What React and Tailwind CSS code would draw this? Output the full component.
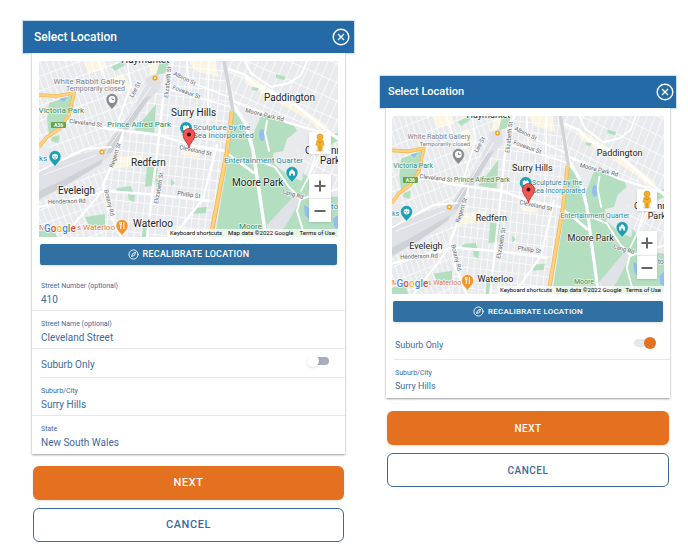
import React, { useId, useState } from 'react';
import { Compass } from 'lucide-react';

const MAP_W = 299;

const px = (x) => `${(x / MAP_W) * 100}%`;

const placeLabels = [
    { text: 'Haymarket', x: 82, y: 2, size: 10, kind: 'place' },
    { text: 'Surry Hills', x: 132, y: 55, size: 10, kind: 'place' },
    { text: 'Paddington', x: 225, y: 40, size: 10, kind: 'place' },
    { text: 'Redfern', x: 92, y: 105, size: 10, kind: 'place' },
    { text: 'Eveleigh', x: 19, y: 133, size: 10, kind: 'place' },
    { text: 'Moore Park', x: 193, y: 125, size: 10, kind: 'place' },
    { text: 'Waterloo', x: 94, y: 166, size: 10, kind: 'place' },
    { text: 'Centennial', x: 266, y: 93, size: 10, kind: 'place' },
    { text: 'Park', x: 281, y: 103, size: 10, kind: 'place' },
    { text: 'White Rabbit Gallery', x: 86, y: 23, size: 8, kind: 'muted', anchor: 'end' },
    { text: 'Temporarily closed', x: 86, y: 30, size: 7, kind: 'muted', anchor: 'end' },
    { text: 'Victoria Park', x: 45, y: 52, size: 8, kind: 'park', anchor: 'end' },
    { text: 'Prince Alfred Park', x: 68, y: 66, size: 8, kind: 'park' },
    { text: 'Moore', x: 200, y: 168, size: 8, kind: 'park' },
    { text: 'Sculpture by the', x: 154, y: 69, size: 8, kind: 'sight' },
    { text: 'Sea Incorporated', x: 154, y: 77, size: 8, kind: 'sight' },
    { text: 'Entertainment Quarter', x: 185, y: 102, size: 8, kind: 'sight' },
    { text: 'ks', x: 0, y: 100, size: 8, kind: 'sight' },
    { text: 'to', x: 292, y: 148, size: 8, kind: 'sight' },
    { text: 'M', x: 0, y: 169, size: 8, kind: 'food' },
    { text: 's Waterloo', x: 76, y: 169, size: 8, kind: 'food', anchor: 'end' },
    { text: 'Lee St', x: 94, y: 37, size: 6, kind: 'street', rotate: -62 },
    { text: 'Elizabeth St', x: 129, y: 37, size: 6, kind: 'street', rotate: -84 },
    { text: 'Albion St', x: 134, y: 14, size: 6, kind: 'street', rotate: 26 },
    { text: 'Foveaux St', x: 133, y: 28, size: 6, kind: 'street', rotate: 20 },
    { text: 'Cleveland St', x: 30, y: 62, size: 6, kind: 'street', rotate: 7 },
    { text: 'Cleveland St', x: 140, y: 88, size: 6, kind: 'street', rotate: 12 },
    { text: 'Moore Park Rd', x: 206, y: 51, size: 6, kind: 'street', rotate: 14 },
    { text: 'Lang Rd', x: 243, y: 132, size: 6, kind: 'street', rotate: 17 },
    { text: 'Regent St', x: 74, y: 107, size: 6, kind: 'street', rotate: -72 },
    { text: 'Botany Rd', x: 65, y: 129, size: 6, kind: 'street', rotate: 76 },
    { text: 'Elizabeth St', x: 119, y: 143, size: 6, kind: 'street', rotate: -80 },
    { text: 'Phillip St', x: 138, y: 134, size: 6, kind: 'street', rotate: 8 },
    { text: 'Henderson Rd', x: 9, y: 143, size: 6, kind: 'street', rotate: -2 },
];

const labelColors = {
    place: '#202124',
    muted: '#7b8087',
    park: '#2f8a57',
    sight: '#2a8ba3',
    food: '#dd7a3c',
    street: '#5f6368',
};

const googleLetters = [
    ['G', '#4285f4'],
    ['o', '#ea4335'],
    ['o', '#fbbc04'],
    ['g', '#4285f4'],
    ['l', '#34a853'],
    ['e', '#ea4335'],
];

function MapPin({ x, y, color, children }) {
    return (
        <svg x={px(x)} y={y} overflow="visible">
            <path d="M0 0C-.8-3-6-5.5-6-10.5A6 6 0 0 1 6-10.5C6-5.5.8-3 0 0Z" fill={color} stroke="#fff" strokeWidth=".5" />
            {children}
        </svg>
    );
}

function MapTerrain() {
    const id = useId();
    const fine = `${id}-fine`;
    const slanted = `${id}-slanted`;
    const wide = `${id}-wide`;

    return (
        <svg className="absolute inset-0 h-full w-full" viewBox="0 0 299 176" preserveAspectRatio="none" aria-hidden="true">
            <defs>
                <pattern id={fine} width="7" height="10" patternUnits="userSpaceOnUse" patternTransform="rotate(6)">
                    <path d="M0 0H7M0 0V10" stroke="#fff" strokeWidth="1.5" />
                </pattern>
                <pattern id={slanted} width="6" height="14" patternUnits="userSpaceOnUse" patternTransform="rotate(-20)">
                    <path d="M0 0H6M0 0V14" stroke="#fff" strokeWidth="1.4" />
                </pattern>
                <pattern id={wide} width="8" height="17" patternUnits="userSpaceOnUse" patternTransform="rotate(24)">
                    <path d="M0 0H8M0 0V17" stroke="#fff" strokeWidth="1.4" />
                </pattern>
            </defs>
            <rect width="299" height="176" fill="#e8eaed" />

            {/* Commercial blocks */}
            <g fill="#fbf5e1">
                <path d="M44 0L66 0L68 8L50 12ZM70 18L84 12L92 26L80 34ZM112 4L122 0L120 14L108 20ZM150 0H176L180 16L156 10ZM76 96L104 94L102 104L74 108ZM142 86L160 90L158 96L142 94Z" />
                <path d="M206 14L216 18L276 56L290 66L284 72L268 58L206 22Z" />
            </g>

            {/* Street grids */}
            <path d="M0 0H122L66 92L40 98L0 84Z" fill={`url(#${slanted})`} />
            <path d="M128 0H186L194 52L174 176H64L72 100L118 10Z" fill={`url(#${fine})`} />
            <path d="M186 0H299V72L256 62L194 46Z" fill={`url(#${wide})`} />
            <path d="M0 140L70 104L66 176H0Z" fill={`url(#${slanted})`} />
            <path d="M258 88L299 78V132L264 122Z" fill={`url(#${wide})`} />

            {/* Rail yards */}
            <path d="M0 108L26 98L62 88L96 48L108 16L120 12L122 26L86 66L70 96L30 120L0 140Z" fill="#dfe1e6" />
            <path d="M0 130L22 120L64 98L62 103L28 124L0 138Z" fill="#ced1d6" />
            <path d="M62 93L88 58L104 38L112 34L98 56L72 92Z" fill="#ced1d6" />
            <path d="M66 92L112 26M62 90L108 22M4 114L58 94" fill="none" stroke="#f5f6f8" strokeWidth="1" />

            {/* Parks */}
            <g fill="#b3dfc0">
                <path d="M10 42L34 34L30 54L22 66L10 74L8 58Z" />
                <path d="M13 76L21 74L19 82L12 80Z" />
                <path d="M117 43L115 72L95 69L108 54Z" />
                <path d="M121 0H131L126 12L117 14Z" />
                <path d="M72 6L84 0L86 4L76 10Z" />
                <path d="M108 105L119 107L116 124L106 126Z" />
                <path d="M78 127L92 125L94 131L76 132ZM89 133L96 134L95 141L90 139ZM117 118L124 120L122 126L117 124ZM132 118L136 122L132 125Z" />
                <path d="M46 156L66 153V166L50 165ZM0 170L14 166L18 176H0ZM104 164L112 162L108 176H103ZM0 145L6 143L2 148Z" />
                <path d="M155 147L168 146L167 152L155 153Z" />
                <path d="M237 13L247 16L245 19L237 17ZM213 26L220 27L218 30L213 29Z" />
                <path d="M194 50L203 57L211 78L219 120L230 176H176L190 92Z" />
                <path d="M221 57L226 51L243 58L254 62L258 70L248 78L244 90L234 92L236 104L252 116L263 120L264 112L272 118L269 134L258 142L240 162L227 164L215 88L213 76Z" />
                <path d="M254 146L270 134L299 136V176H240Z" />
                <path d="M284 78L299 72V80L286 86Z" />
            </g>
            <path d="M228 164L256 134L262 138L246 166L236 172Z" fill="#dfe2e7" />
            <g fill="#94bdf2">
                <ellipse cx="223" cy="74" rx="3" ry="6" />
                <path d="M20 38L28 36L25 41ZM265 144L272 148L270 158L266 154ZM294 158L299 154V168L295 166Z" />
            </g>

            {/* Main roads */}
            <g fill="none" stroke="#fff" strokeLinecap="round">
                <path d="M14 72L30 60L70 68L120 74L152 84L186 90" strokeWidth="2.6" />
                <path d="M88 0L92 24L76 70M60 0L70 28" strokeWidth="1.8" />
                <path d="M134 0L124 40L120 76L108 176" strokeWidth="2.4" />
                <path d="M84 72L76 96L64 124L70 150L82 176" strokeWidth="2.6" />
                <path d="M0 146L60 132L66 130L120 134L170 140" strokeWidth="2.6" />
                <path d="M60 134L24 176M0 110L46 88L72 86" strokeWidth="2" />
                <path d="M178 84L164 138L134 176" strokeWidth="2.4" />
                <path d="M128 12L190 36M128 28L192 46M148 0L150 30M170 0L168 80" strokeWidth="1.8" />
                <path d="M193 42L206 62L214 89L220 130L227 176" strokeWidth="3.4" />
                <path d="M190 8L206 14L216 24L254 42L299 78" strokeWidth="2.8" />
                <path d="M188 12L194 40L250 62L299 76" strokeWidth="2.6" />
                <path d="M206 0L212 12L232 26L250 22L262 14L268 0" strokeWidth="2" />
                <path d="M188 92L214 112M200 100L218 114M228 60L226 72L230 90" strokeWidth="2" />
                <path d="M214 98L236 106L250 126L262 138L299 128M262 136L258 150L266 176" strokeWidth="2" />
                <path d="M286 84L262 130M270 84L276 96L268 120" strokeWidth="1.6" />
            </g>
            <path d="M185 0L190 26L194 50" fill="none" stroke="#d0d3d8" strokeWidth="3.6" />

            {/* Highways */}
            <g fill="none" stroke="#f3b24c" strokeWidth="4.4">
                <path d="M193 50L188 90L174 164L172 176" />
                <path d="M0 34L18 35L35 32L30 54L20 68L8 76L0 86" strokeWidth="3.6" />
            </g>
            <g fill="none" stroke="#fcd27c" strokeWidth="3">
                <path d="M193 50L188 90L174 164L172 176" />
                <path d="M0 34L18 35L35 32L30 54L20 68L8 76L0 86" strokeWidth="2.4" />
            </g>
        </svg>
    );
}

function MapLabels({ compact }) {
    const labelSize = ({ size }) => (compact && size > 6 ? size - 1 : size);

    return (
        <svg className="absolute inset-0 h-full w-full">
            {[[116, 17], [63, 91]].map(([x, y]) => (
                <svg key={x} x={px(x)} y={y} overflow="visible">
                    <circle r="2.6" fill="#f5a623" />
                    <circle r="1" fill="#fff" />
                </svg>
            ))}

            <svg x={px(12)} y="61" overflow="visible">
                <rect width="15" height="6" rx="1" fill="#67a544" />
                <text x="7.5" y="5" fontSize="5" fontWeight="700" fill="#fff" textAnchor="middle">A36</text>
            </svg>

            {placeLabels.map((label) => (
                <svg key={`${label.text}-${label.x}`} x={px(label.x)} y={label.y} overflow="visible">
                    <text
                        fontSize={labelSize(label)}
                        fill={labelColors[label.kind]}
                        stroke="#fff"
                        strokeOpacity=".7"
                        strokeWidth="1.5"
                        paintOrder="stroke"
                        textAnchor={label.anchor || 'start'}
                        transform={label.rotate ? `rotate(${label.rotate})` : undefined}
                    >
                        {label.text}
                    </text>
                </svg>
            ))}

            <MapPin x={73} y={49} color="#868b92">
                <circle cy="-10.5" r="3.4" fill="#fff" />
                <path d="M0-12.5V-10.5H2" fill="none" stroke="#868b92" />
            </MapPin>
            <MapPin x={16} y={106} color="#1e9fb4">
                <path d="M0-7.5C-2-7.5-3-9-3-10.5C-3-12-2-13-1-12.5L0-13.5L1-12.5C2-13 3-12 3-10.5C3-9 2-7.5 0-7.5Z" fill="#fff" />
                <path d="M-1.2-11V-10M1.2-11V-10M-1-9H1" fill="none" stroke="#1e9fb4" strokeWidth=".8" />
            </MapPin>
            <MapPin x={253} y={122} color="#1e9fb4">
                <path d="M-3-7.5V-11.5H-1.5V-13H-.5V-14H.5V-13H1.5V-11.5H3V-7.5H1V-9.5H-1V-7.5Z" fill="#fff" />
            </MapPin>
            <MapPin x={83} y={175} color="#f2962d">
                <path d="M-2-14V-11.5H-.5V-14M-1.2-12V-7M1.8-14V-7" fill="none" stroke="#fff" />
            </MapPin>

            {/* Selected location */}
            <svg x={px(147)} y="67" overflow="visible">
                <circle r="6" fill="#1e9fb4" />
                <path d="M-3 2V-1.5L-1-3L0-1.5L1.5-3L3-1.5V2Z" fill="#fff" />
            </svg>
            <svg x={px(150)} y="87" overflow="visible">
                <path d="M0 0C-.6-5-6-8-6-13.5A6 6 0 0 1 6-13.5C6-8 .6-5 0 0Z" fill="#f0574f" stroke="#b3282d" strokeWidth=".8" />
                <circle cy="-13.5" r="2" fill="#3a0d0d" />
            </svg>

            <svg x={px(5)} y="171" overflow="visible">
                <text fontSize="10" fontWeight="500" stroke="#fff" strokeWidth="1.5" paintOrder="stroke">
                    {googleLetters.map(([letter, color], i) => (
                        <tspan key={i} fill={color}>{letter}</tspan>
                    ))}
                </text>
            </svg>
        </svg>
    );
}

function LocationMap({ compact }) {
    return (
        <div className={`relative overflow-hidden ${compact ? 'h-[178px]' : 'h-44'}`}>
            <MapTerrain />
            <MapLabels compact={compact} />
            <div className={`absolute right-0 bottom-0 flex h-2 items-center bg-white/70 px-[3px] text-[6px] leading-none text-black ${compact ? 'gap-1' : 'gap-1.5'}`}>
                <button type="button">Keyboard shortcuts</button>
                <span>Map data ©2022 Google</span>
                <a href="#terms">Terms of Use</a>
            </div>
            <div className={`absolute right-[7px] bottom-[15px] flex flex-col ${compact ? 'w-5' : 'w-[22px]'}`}>
                <button type="button" aria-label="Street View" className="mb-5 flex h-[22px] items-center justify-center bg-white shadow-sm">
                    <svg width="12" height="20" viewBox="0 0 12 20">
                        <ellipse cx="6" cy="17.5" rx="4" ry="1.5" fill="#e3e3e3" />
                        <path d="M2.5 7.5Q6 5.5 9.5 7.5L10.5 12L8.8 13L8.2 18H3.8L3.2 13L1.5 12Z" fill="#f3b02c" />
                        <path d="M3.5 8L6 10L8.5 8M6 13V18" fill="none" stroke="#c9821a" strokeWidth=".8" />
                        <circle cx="6" cy="4" r="3" fill="#f3b02c" stroke="#c9821a" strokeWidth=".5" />
                    </svg>
                </button>
                <button type="button" aria-label="Zoom in" className="flex h-6 items-center justify-center bg-white shadow-sm">
                    <svg width="12" height="12" viewBox="0 0 12 12"><path d="M6 .5V11.5M.5 6H11.5" stroke="#666" strokeWidth="2" /></svg>
                </button>
                <button type="button" aria-label="Zoom out" className="flex h-6 items-center justify-center border-t border-gray-200 bg-white shadow-sm">
                    <svg width="12" height="12" viewBox="0 0 12 12"><path d="M.5 6H11.5" stroke="#666" strokeWidth="2" /></svg>
                </button>
            </div>
        </div>
    );
}

function Field({ label, value, compact }) {
    const id = useId();
    const [text, setText] = useState(value);

    return (
        <div className="flex h-[38px] flex-col border-b border-gray-200 px-[9px] pt-[7px] last:border-b-0">
            <label htmlFor={id} className="text-[7px] leading-3">{label}</label>
            <input
                id={id}
                value={text}
                onChange={(e) => setText(e.target.value)}
                className={`h-3.5 w-full bg-transparent outline-none ${compact ? 'text-[9px]' : 'text-[10px]'}`}
            />
        </div>
    );
}

function SuburbToggle({ checked, compact }) {
    const id = useId();
    const [on, setOn] = useState(checked);

    return (
        <div className="ml-2 flex h-[29px] items-center justify-between border-b border-gray-200 pr-4 pl-px">
            <label htmlFor={id} className={`pt-0.5 ${compact ? 'text-[9px]' : 'text-[10px]'}`}>Suburb Only</label>
            <input
                id={id}
                type="checkbox"
                role="switch"
                checked={on}
                onChange={(e) => setOn(e.target.checked)}
                className="relative mb-1 h-2 w-5 appearance-none rounded-full bg-[#a9acb9] before:absolute before:-top-0.5 before:-left-0.5 before:h-3 before:w-3 before:rounded-full before:bg-white before:shadow before:content-[''] checked:bg-gray-200 checked:before:left-2.5 checked:before:bg-[#e3711f] checked:before:shadow-none"
            />
        </div>
    );
}

function LocationPanel({ suburbOnly, compact }) {
    return (
        <section className="text-[#3d6a9c]">
            <header className={`flex h-8 items-center justify-between bg-[#236aa6] text-white shadow-[0_0_1px_1px_#cfe0ef] ${compact ? 'pr-0.5 pl-2' : 'pr-1 pl-[11px]'}`}>
                <h2 className={`font-medium ${compact ? 'text-[11px]' : 'text-xs'}`}>Select Location</h2>
                <button type="button" aria-label="Close">
                    <svg width="18" height="18" viewBox="0 0 18 18" fill="none" stroke="currentColor" strokeWidth="1.4">
                        <circle cx="9" cy="9" r="7.8" />
                        <path d="M6 6L12 12M12 6L6 12" />
                    </svg>
                </button>
            </header>

            <div className={compact ? 'px-1.5' : 'px-[9px]'}>
                <div className="bg-white shadow-[0_1px_2px_rgba(0,0,0,0.4)]">
                    <div className={`pt-2 ${compact ? 'px-1.5 pb-[9px]' : 'px-[7px] pb-2'}`}>
                        <LocationMap compact={compact} />
                        <div className="px-px pt-[7px]">
                            <button
                                type="button"
                                className={`flex h-[21px] w-full items-center justify-center gap-1 rounded-xs bg-[#3070a3] font-medium tracking-wide text-white shadow-sm ${compact ? 'text-[8px]' : 'text-[9px]'}`}
                            >
                                <Compass size={11} strokeWidth={2} />
                                RECALIBRATE LOCATION
                            </button>
                        </div>
                    </div>
                    {!suburbOnly && (
                        <>
                            <Field label="Street Number (optional)" value="410" compact={compact} />
                            <Field label="Street Name (optional)" value="Cleveland Street" compact={compact} />
                        </>
                    )}
                    <SuburbToggle checked={suburbOnly} compact={compact} />
                    <Field label="Suburb/City" value="Surry Hills" compact={compact} />
                    {!suburbOnly && <Field label="State" value="New South Wales" compact={compact} />}
                </div>

                <div className={`flex flex-col gap-2 px-px font-medium tracking-wider ${compact ? 'pt-[13px] text-[10px]' : 'pt-3 text-[11px]'}`}>
                    <button type="button" className="h-[34px] rounded-md bg-[#e3711f] text-white shadow-sm">NEXT</button>
                    <button type="button" className="h-[34px] rounded-md border border-[#3d6a9c] bg-white">CANCEL</button>
                </div>
            </div>
        </section>
    );
}

export default function App() {
    return (
        <main className="grid min-h-screen grid-cols-[331fr_296fr] items-start gap-[26px] bg-white pr-3 pl-[23px] font-[Roboto,sans-serif]">
            <div className="pt-[21px]">
                <LocationPanel suburbOnly={false} />
            </div>
            <div className="pt-[76px]">
                <LocationPanel suburbOnly compact />
            </div>
        </main>
    );
}
